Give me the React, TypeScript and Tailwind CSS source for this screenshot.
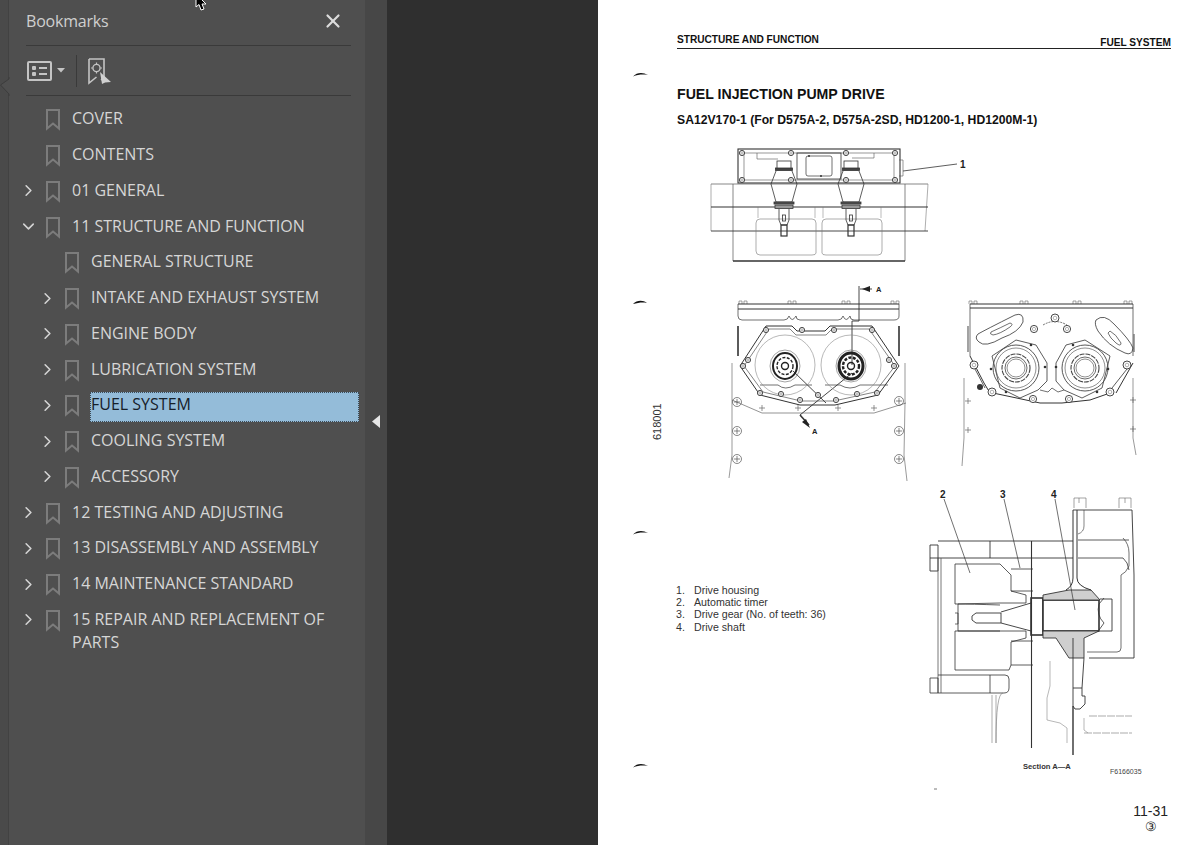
import { ChevronDown, ChevronRight, X } from "lucide-react";

type Bookmark = {
  label: string;
  level: number;
  toggle?: "open" | "closed";
  selected?: boolean;
};

const bookmarks: Bookmark[] = [
  { label: "COVER", level: 0 },
  { label: "CONTENTS", level: 0 },
  { label: "01 GENERAL", level: 0, toggle: "closed" },
  { label: "11 STRUCTURE AND FUNCTION", level: 0, toggle: "open" },
  { label: "GENERAL STRUCTURE", level: 1 },
  { label: "INTAKE AND EXHAUST SYSTEM", level: 1, toggle: "closed" },
  { label: "ENGINE BODY", level: 1, toggle: "closed" },
  { label: "LUBRICATION SYSTEM", level: 1, toggle: "closed" },
  { label: "FUEL SYSTEM", level: 1, toggle: "closed", selected: true },
  { label: "COOLING SYSTEM", level: 1, toggle: "closed" },
  { label: "ACCESSORY", level: 1, toggle: "closed" },
  { label: "12 TESTING AND ADJUSTING", level: 0, toggle: "closed" },
  { label: "13 DISASSEMBLY AND ASSEMBLY", level: 0, toggle: "closed" },
  { label: "14 MAINTENANCE STANDARD", level: 0, toggle: "closed" },
  { label: "15 REPAIR AND REPLACEMENT OF PARTS", level: 0, toggle: "closed" },
];

const legend = [
  ["1.", "Drive housing"],
  ["2.", "Automatic timer"],
  ["3.", "Drive gear (No. of teeth: 36)"],
  ["4.", "Drive shaft"],
];

const BookmarkIcon = () => (
  <svg width="16" height="23" viewBox="0 0 16 23" className="shrink-0" fill="none">
    <path d="M2 2H14V20.5L8 15.5L2 20.5Z" stroke="#7c7c7c" strokeWidth="2" />
  </svg>
);

const TreeRow = ({ item }: { item: Bookmark }) => (
  <div className={`flex h-[35.75px] items-start ${item.level === 1 ? "pl-[28.5px]" : "pl-[9.5px]"}`}>
    <div className="flex h-[36px] w-[20px] shrink-0 items-center justify-center text-[#d4d4d4]">
      {item.toggle === "closed" && <ChevronRight size={19} strokeWidth={2} />}
      {item.toggle === "open" && <ChevronDown size={19} strokeWidth={2} />}
    </div>
    <div className="ml-[6.5px] mt-[7px]">
      <BookmarkIcon />
    </div>
    <div
      className={`leading-[23px] ${
        item.selected
          ? "ml-[10px] mt-[5px] h-[30px] w-[269px] border border-dotted border-[#3c4a55] bg-[#94bcd9] text-[#16202a]"
          : "ml-[11px] h-[31px] w-[270px] pt-[6px] text-[#d6d6d6]"
      }`}
    >
      {item.label}
    </div>
  </div>
);

const Sidebar = () => (
  <aside className="flex w-[356px] shrink-0 flex-col bg-[#4f4f4f] font-['Open_Sans',sans-serif] text-[16px]">
    <div className="ml-[17px] mr-[14px] flex h-[46px] items-center justify-between border-b border-[#3a3a3a] pb-[3px] pr-[7px]">
      <span className="tracking-[-0.2px] text-[#cfcfcf]">Bookmarks</span>
      <X size={22} strokeWidth={2.4} className="text-[#dcdcdc]" />
    </div>
    <div className="ml-[17px] mr-[14px] flex h-[50px] items-center border-b border-[#3a3a3a] pl-[1px]">
      <svg width="25" height="20" viewBox="0 0 25 20" fill="none">
        <rect x="1" y="1" width="23" height="18" rx="1" stroke="#c4c4c4" strokeWidth="2" />
        <rect x="5" y="5" width="4" height="4" rx="1" fill="#c4c4c4" />
        <rect x="5" y="11" width="4" height="4" rx="1" fill="#c4c4c4" />
        <path d="M12 7H20M12 13H20" stroke="#c4c4c4" strokeWidth="2" />
      </svg>
      <svg width="8" height="5" viewBox="0 0 8 5" className="ml-[5px]">
        <path d="M0 0H8L4 4.5Z" fill="#c4c4c4" />
      </svg>
      <div className="ml-[11px] h-[32px] w-px bg-[#3a3a3a]" />
      <svg width="25" height="28" viewBox="0 0 25 28" fill="none" className="ml-[10px]">
        <path d="M2 2H17V24L14 22M9.5 20L2 26V2" stroke="#c4c4c4" strokeWidth="1.6" />
        <circle cx="9.5" cy="11" r="3.6" stroke="#c4c4c4" strokeWidth="1.4" />
        <path d="M9.5 5.5V7M9.5 15V16.5M4 11H5.5M13.5 11H15" stroke="#c4c4c4" strokeWidth="1.2" />
        <path d="M13 15L24 25L18 25.5L15 27Z" fill="#d0d0d0" />
      </svg>
    </div>
    <div className="pt-[5.3px]">
      {bookmarks.map((item) => (
        <TreeRow key={item.label} item={item} />
      ))}
    </div>
  </aside>
);

const Mark = () => (
  <svg width="15" height="5" viewBox="0 0 15 5" className="block">
    <path d="M0 4.5C4 0 10 0 15 3C10 2 5 2.5 0 4.5Z" fill="#111" />
  </svg>
);

const Bolt = ({ x, y, r = 2.6 }: { x: number; y: number; r?: number }) => (
  <g>
    <circle cx={x} cy={y} r={r} fill="#fff" stroke="#333" strokeWidth="0.9" />
    <circle cx={x} cy={y} r={r * 0.45} fill="none" stroke="#666" strokeWidth="0.5" />
  </g>
);

const PlusBolt = ({ x, y }: { x: number; y: number }) => (
  <g stroke="#555" strokeWidth="0.7" fill="none">
    <circle cx={x} cy={y} r="4.5" />
    <path d={`M${x - 3} ${y}H${x + 3}M${x} ${y - 3}V${y + 3}`} />
  </g>
);

const Plus = ({ x, y }: { x: number; y: number }) => (
  <path d={`M${x - 3} ${y}H${x + 3}M${x} ${y - 3}V${y + 3}`} stroke="#666" strokeWidth="0.7" />
);

const Tab = ({ x, y = 303 }: { x: number; y?: number }) => (
  <path d={`M${x - 4} ${y + 3}V${y}H${x - 1}V${y + 3}M${x + 1} ${y + 3}V${y}H${x + 4}V${y + 3}`} fill="none" stroke="#666" strokeWidth="0.6" />
);

const Pump = ({ cx }: { cx: number }) => (
  <g stroke="#333" fill="none" strokeWidth="0.8">
    <rect x={cx - 7} y="163" width="14" height="8" fill="#fff" />
    <rect x={cx - 8.5} y="170" width="17" height="2.5" fill="#444" />
    <path d={`M${cx - 8} 173L${cx - 13} 186L${cx - 8} 204H${cx + 8}L${cx + 13} 186L${cx + 8} 173`} />
    <rect x={cx - 10} y="204" width="20" height="2" fill="#555" />
    <rect x={cx - 9} y="207" width="18" height="3.5" fill="#999" />
    <path d={`M${cx - 5} 211V222L${cx - 3} 227H${cx + 3}L${cx + 5} 222V211`} />
    <rect x={cx - 1.5} y="217" width="3" height="6" />
    <rect x={cx - 3} y="227" width="6" height="11" strokeWidth="1.2" />
  </g>
);

const Hub = ({ cx, cy, dark = false }: { cx: number; cy: number; dark?: boolean }) => (
  <g fill="none" stroke="#222">
    <ellipse cx={cx} cy={cy} rx="15" ry="16" strokeWidth="0.6" stroke="#666" />
    <ellipse cx={cx} cy={cy} rx="12" ry="13" strokeWidth={dark ? 3 : 2} />
    <ellipse cx={cx} cy={cy} rx="8" ry="8.5" strokeWidth={dark ? 2.4 : 1.4} strokeDasharray="3 1.5" />
    <circle cx={cx} cy={cy} r="3.5" strokeWidth="1.4" />
  </g>
);

const Ring = ({ cx, cy }: { cx: number; cy: number }) => (
  <g fill="none" stroke="#444">
    <circle cx={cx} cy={cy} r="23" strokeWidth="0.9" />
    <circle cx={cx} cy={cy} r="20" strokeWidth="0.6" />
    <circle cx={cx} cy={cy} r="14" strokeWidth="1.1" strokeDasharray="5 1" />
    <circle cx={cx} cy={cy} r="11" strokeWidth="0.8" />
    <circle cx={cx} cy={cy} r="9" strokeWidth="0.6" />
  </g>
);

// top and middle figures, drawn in screen coordinates
const UpperFigures = () => (
  <svg width="602" height="348" viewBox="598 140 602 348" className="block" fill="none">
    {/* cover view */}
    <g stroke="#333" strokeWidth="0.9">
      <rect x="738" y="151" width="162" height="34" strokeWidth="1.1" />
      <rect x="744" y="155" width="150" height="27" stroke="#555" strokeWidth="0.6" />
      <rect x="797" y="155" width="44" height="26" strokeWidth="0.8" />
      <rect x="806" y="158" width="26" height="20" rx="2" strokeWidth="0.7" />
      <path d="M757 155V161H778M852 160H874V155M899 162H903V178H899" stroke="#555" strokeWidth="0.6" />
      <path d="M903 173L957 166" strokeWidth="0.8" />
      <path d="M711 186H928M733 186V263M905 186V263" stroke="#555" strokeWidth="0.7" />
      <path d="M711 186V233M928 186L925 233" stroke="#777" strokeWidth="0.6" />
      <path d="M711 209H928" strokeWidth="1.1" />
      <path d="M711 233H928" strokeWidth="0.9" />
      <path d="M733 263H905" strokeWidth="1.4" />
      <path d="M758 209V220M881 209V220M815 209V220M823 209V220" stroke="#777" strokeWidth="0.5" />
      <path d="M756 225Q756 221 760 221H812Q816 221 816 225V255Q816 257 812 257H760Q756 257 756 253Z" stroke="#777" strokeWidth="0.6" />
      <path d="M822 225Q822 221 826 221H878Q882 221 882 225V253Q882 257 878 257H826Q822 257 822 255Z" stroke="#777" strokeWidth="0.6" />
    </g>
    {[742, 791, 846, 895].map((x) => (
      <g key={x}>
        <Bolt x={x} y={155} />
        <Bolt x={x} y={182} />
      </g>
    ))}
    <Pump cx={784} />
    <Pump cx={851} />
    <circle cx="809" cy="158" r="1" fill="#333" />
    <circle cx="821" cy="178" r="1" fill="#333" />
    <text x="960" y="170" fontFamily="Liberation Sans" fontSize="10" fontWeight="700" fill="#222">1</text>

    {/* section marks */}
    <path d="M633 306C637 302 643 302 647 305C642 304 638 305 633 306Z" fill="#111" />

    {/* drawing number */}
    <text x="661" y="442" transform="rotate(-90 661 442)" fontFamily="Liberation Sans" fontSize="11" fill="#333">618001</text>

    {/* left gasket view */}
    <g stroke="#333" strokeWidth="0.9">
      {[743, 792, 846, 895].map((x) => (
        <Tab key={x} x={x} />
      ))}
      <path d="M738 306H899M738 311H899" strokeWidth="1" />
      <path d="M738 306V318Q738 322 742 322H784Q788 322 789 318Q792 325 796 318Q796 322 800 322H838Q842 322 843 318Q846 325 850 318Q850 322 854 322H894Q899 322 899 318V306" strokeWidth="0.7" />
      <path d="M738 328V358M899 328V358" strokeWidth="1.6" />
      <path d="M766 328H792L797 333H825L830 328H872L899 368L878 397L835 407L800 407L760 397L740 368Z" strokeWidth="1" />
      <path d="M769 331H790L796 337H826L832 331H869L895 368L875 394L834 403L801 403L763 394L744 368Z" strokeWidth="0.6" />
      <path d="M760 387H778Q785 393 795 387H812M825 387H840Q850 393 860 387H888" strokeWidth="0.7" />
      <path d="M732 402L762 415H874L906 405" stroke="#666" strokeWidth="0.7" />
      <path d="M732 365L732 402V457L729 480M905 365V405L904 457L907 483" stroke="#555" strokeWidth="0.6" />
      <path d="M859 288V323H852V367" strokeWidth="0.9" />
      <path d="M793 373L826 405M852 375L800 417" strokeWidth="0.9" />
      <path d="M860 291H872" />
      <path d="M800 417L809 427" strokeWidth="1.6" />
    </g>
    <circle cx="785" cy="367" r="30" stroke="#888" strokeWidth="0.6" />
    <circle cx="851" cy="367" r="30" stroke="#888" strokeWidth="0.6" />
    <Hub cx={785} cy={368} />
    <Hub cx={851} cy={368} dark />
    <path d="M862 291L870 288V294Z" fill="#222" />
    <path d="M810 430L802 424L806 421Z" fill="#222" />
    {[[766, 332], [802, 332], [834, 332], [872, 332], [748, 362], [743, 368], [889, 362], [894, 368], [760, 395], [781, 396], [800, 402], [818, 397], [836, 402], [857, 396], [877, 395]].map(([x, y]) => (
      <Bolt key={`${x}-${y}`} x={x} y={y} />
    ))}
    {[[737, 404], [899, 403], [737, 433], [899, 433], [737, 461], [899, 461]].map(([x, y]) => (
      <PlusBolt key={`${x}-${y}`} x={x} y={y} />
    ))}
    {[[762, 410], [798, 410], [838, 410], [874, 410]].map(([x, y]) => (
      <Plus key={x} x={x} y={y} />
    ))}
    <text x="876" y="294" fontFamily="Liberation Sans" fontSize="7.5" fontWeight="700" fill="#222">A</text>
    <text x="812" y="436" fontFamily="Liberation Sans" fontSize="7.5" fontWeight="700" fill="#222">A</text>

    {/* right housing view */}
    <g stroke="#333" strokeWidth="0.9">
      {[973, 1024, 1077, 1128].map((x) => (
        <Tab key={x} x={x} />
      ))}
      <path d="M970 306H1133M970 310H1133" strokeWidth="1" />
      <path d="M970 306V358M1133 306V358" strokeWidth="0.7" />
      <path d="M968 328V354M1134 336V354" stroke="#666" strokeWidth="1.2" />
      <path d="M978 336Q985 332 1015 317Q1024 314 1023 324Q1019 334 1002 340Q985 350 979 344Q974 340 978 336Z" strokeWidth="0.8" />
      <path d="M991 334Q1000 330 1010 325Q1014 326 1010 329Q1000 336 993 337Q989 336 991 334Z" strokeWidth="0.7" />
      <path d="M1096 322Q1104 315 1114 326Q1130 342 1133 350Q1132 358 1125 355Q1108 348 1098 333Q1094 326 1096 322Z" strokeWidth="0.8" />
      <path d="M1110 333Q1116 336 1121 345Q1121 349 1116 345Q1110 340 1108 335Z" strokeWidth="0.7" />
      <path d="M1043 327Q1055 320 1067 327" strokeDasharray="2 1" strokeWidth="0.7" />
      <path d="M970 358L984 385L990 395M1133 365L1116 395" strokeWidth="1" />
      <path d="M993 395L1026 402L1040 405H1062L1090 402L1110 395" strokeWidth="1" />
      <path d="M992 358L1016 342L1036 347L1047 365V383L1038 392L1020 400L1000 390Z" strokeWidth="0.8" />
      <path d="M1110 358L1085 342L1066 347L1056 365V383L1064 392L1082 400L1102 390Z" strokeWidth="0.8" />
      <path d="M1040 392L1048 394L1052 390L1058 394L1064 392" strokeWidth="0.7" />
      <path d="M964 380L964 440L962 468M1133 380L1133 440L1136 457" stroke="#555" strokeWidth="0.6" />
      <path d="M975 371L985 390M1127 371L1112 390" strokeWidth="0.8" />
    </g>
    <Ring cx={1016} cy={370} />
    <Ring cx={1085} cy={370} />
    {[[974, 367, 4], [1127, 367, 4], [992, 394, 4], [1033, 401, 3.6], [1069, 401, 3.6], [1110, 394, 4], [1034, 331, 3.6], [1067, 331, 3.6], [1055, 320, 4]].map(([x, y, r]) => (
      <Bolt key={`${x}-${y}`} x={x} y={y} r={r} />
    ))}
    <circle cx="980" cy="389" r="3" fill="#333" />
    {[[991, 371], [1045, 369], [1056, 369], [1108, 371], [1031, 347], [1073, 347], [1006, 394], [1097, 394]].map(([x, y]) => (
      <circle key={`${x}-${y}`} cx={x} cy={y} r="1.3" fill="#333" />
    ))}
    {[[968, 403], [968, 432], [1133, 402], [1133, 431]].map(([x, y]) => (
      <Plus key={`${x}-${y}`} x={x} y={y} />
    ))}
  </svg>
);

// section A-A, same coordinates
const SectionFigure = () => (
  <svg width="300" height="312" viewBox="900 488 300 312" className="block" fill="none">
    <g stroke="#333" strokeWidth="0.9">
      <path d="M938 543H1073M930 560H1073M930 547H938V573H930ZM990 543V560" strokeWidth="0.9" />
      <path d="M938 560V695M941 560V695" stroke="#555" strokeWidth="0.8" />
      <path d="M930 680H938V695H930ZM938 677H1005Q1009 677 1009 681V690Q1009 695 1004 695H938" strokeWidth="0.8" />
      <path d="M990 677V695" strokeWidth="0.8" />
      <path d="M1031.5 543V750" strokeWidth="1.1" />
      <path d="M992 697V745M996 697L996 745Q996 695 1003 695" stroke="#777" strokeWidth="0.6" />
      <path d="M955 566H1000L1011 577V593L1026 597V605H1000L955 606Z" strokeWidth="0.8" />
      <path d="M1011 571H1033M1011 593H1033" strokeWidth="0.8" />
      <path d="M955 633H1000L1026 633V640L1011 644V667L1009 672H955Z" strokeWidth="0.8" />
      <path d="M1011 643H1033M1011 667H1033" strokeWidth="0.8" />
      <path d="M958 606Q970 606 1000 607M958 606V633M958 633H1000" strokeWidth="0.8" />
      <path d="M955 615H958V626H955" strokeWidth="0.7" />
      <path d="M972 618L976 615H1001V625H976L972 622Z" strokeWidth="0.9" />
      <path d="M1001 614L1031 605M1001 625L1031 633" strokeWidth="0.9" />
      <rect x="1031" y="600" width="12" height="37" strokeWidth="1.6" />
      <rect x="1043" y="602" width="56" height="31" strokeWidth="1.6" fill="#fff" />
      <path d="M1043 602V597L1069 592H1091L1100 602Z" fill="#cfcfcf" strokeWidth="0.9" />
      <path d="M1043 633V640H1056L1069 660H1084V640L1099 633Z" fill="#cfcfcf" strokeWidth="0.9" />
      <path d="M1073 512V580Q1073 588 1066 592M1077 512V580Q1077 588 1091 592" strokeWidth="1" />
      <path d="M1073 640V690M1084 660L1082 690" strokeWidth="0.9" />
      <path d="M1073 512H1132L1134 577V660H1089" strokeWidth="0.9" />
      <path d="M1121 577V650Q1121 654 1117 654H1087" strokeWidth="0.7" />
      <path d="M1121 577Q1126 575 1129 568V555Q1129 546 1123 540" strokeWidth="0.7" />
      <path d="M1078 542H1129M1078 560H1123Q1128 564 1129 572" strokeWidth="0.8" />
      <path d="M1084 512V528Q1084 534 1078 536" strokeWidth="0.6" />
      <path d="M1074 500H1086V510M1074 500V510M1079 500V505M1119 500H1131V510M1119 500V510M1125 500V505" stroke="#666" strokeWidth="0.6" />
      <path d="M1100 601H1112V633H1100" strokeWidth="0.9" />
      <path d="M1099 606Q1096 617 1104 625L1099 632M1099 606L1104 600" strokeWidth="0.8" />
      <path d="M1073 690H1082V698H1085V706L1080 711H1075L1073 708Z" strokeWidth="0.9" />
      <path d="M1073 708V757" strokeWidth="1.4" />
      <path d="M1050 663V688L1047 700V722L1060 725L1067 730V745M1084 720V732L1088 735" stroke="#888" strokeWidth="0.6" />
      <path d="M1089 718H1132M1084 735H1132" stroke="#888" strokeWidth="0.7" strokeDasharray="8 1" />
      <path d="M944 501L970 575M1004 501L1020 570M1055 501L1075 612" strokeWidth="0.7" />
    </g>
    <g fontFamily="Liberation Sans" fontSize="10" fontWeight="700" fill="#222">
      <text x="940" y="500">2</text>
      <text x="1000" y="500">3</text>
      <text x="1051" y="500">4</text>
    </g>
    <text x="1023" y="771" fontFamily="Liberation Sans" fontSize="7.6" fontWeight="700" fill="#333">Section A—A</text>
    <text x="1110" y="776" fontFamily="Liberation Sans" fontSize="7" fill="#444">F6166035</text>
    <path d="M934 791H937" stroke="#555" strokeWidth="0.8" />
  </svg>
);

const DocumentPage = () => (
  <main className="flex w-[602px] shrink-0 flex-col bg-white font-['Liberation_Sans',sans-serif] text-[#111]">
    <div className="ml-[79px] mr-[29px] mt-[33px] flex h-[16px] justify-between border-b-[1.5px] border-[#222] text-[10.15px] font-bold leading-[13px]">
      <span>STRUCTURE AND FUNCTION</span>
      <span className="pt-[3px]">FUEL SYSTEM</span>
    </div>
    <div className="ml-[35px] mt-[23px]">
      <Mark />
    </div>
    <h1 className="ml-[79px] mt-[8px] text-[14.15px] font-bold leading-[18px]">
      FUEL INJECTION PUMP DRIVE
    </h1>
    <p className="ml-[79px] mt-[9px] text-[12.2px] font-bold leading-[16px]">
      SA12V170-1 (For D575A-2, D575A-2SD, HD1200-1, HD1200M-1)
    </p>
    <div className="mt-[10px]">
      <UpperFigures />
    </div>
    <div className="flex">
      <div className="flex w-[302px] flex-col pl-[35px] pt-[44px]">
        <Mark />
        <ul className="ml-[43px] mt-[49px] text-[10.65px] leading-[12.2px] text-[#333]">
          {legend.map(([num, text]) => (
            <li key={num} className="flex">
              <span className="w-[18px]">{num}</span>
              <span>{text}</span>
            </li>
          ))}
        </ul>
        <div className="mt-[130px]">
          <Mark />
        </div>
      </div>
      <SectionFigure />
    </div>
    <div className="mr-[32px] mt-[4px] flex flex-col items-end text-[#222]">
      <span className="text-[14px] leading-[18px]">11-31</span>
      <span className="mr-[11px] text-[13px] leading-[14px]">③</span>
    </div>
  </main>
);

export default function App() {
  return (
    <div className="relative flex h-[845px] w-[1200px] overflow-hidden bg-[#2f2f2f]">
      <div className="w-[9px] shrink-0 border-r border-[#424242] bg-[#4a4a4a]" />
      <Sidebar />
      <div className="flex w-[22px] shrink-0 items-start justify-center bg-[#474747] pt-[415px]">
        <svg width="8" height="13" viewBox="0 0 8 13">
          <path d="M8 0V13L0 6.5Z" fill="#e6e6e6" />
        </svg>
      </div>
      <div className="flex-1" />
      <DocumentPage />
      {/* collapsed-panel notch */}
      <svg width="10" height="20" viewBox="0 0 10 20" className="absolute left-0 top-[76px]" fill="none">
        <path d="M9 1V3L0.5 9L9 18V20" stroke="#3d3d3d" fill="#4f4f4f" />
      </svg>
      {/* mouse pointer */}
      <svg width="16" height="12" viewBox="0 0 16 12" className="absolute left-[195px] top-0">
        <path d="M1 -6V7L4 4.5L6 10L9 9L7 4H11Z" fill="#000" stroke="#fff" strokeWidth="1" />
      </svg>
    </div>
  );
}
